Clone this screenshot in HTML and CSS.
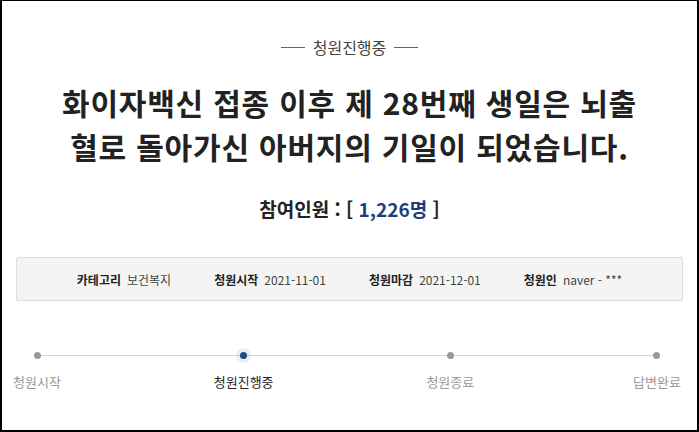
FILE: index.html
```html
<!DOCTYPE html>
<html lang="ko">
<head>
<meta charset="utf-8">
<link rel="stylesheet" href="styles.css">
</head>
<body>
<div class="frame">
  <div class="status"><span class="dash"></span><span class="status-text">청원진행중</span><span class="dash"></span></div>
  <h1 class="title">화이자백신 접종 이후 제 28번째 생일은 뇌출<br>혈로 돌아가신 아버지의 기일이 되었습니다.</h1>
  <div class="count">참여인원 : [ <span class="num">1,226명</span> ]</div>
  <div class="info">
    <div class="item"><b>카테고리</b><span>보건복지</span></div>
    <div class="item"><b>청원시작</b><span>2021-11-01</span></div>
    <div class="item"><b>청원마감</b><span>2021-12-01</span></div>
    <div class="item"><b>청원인</b><span>naver - ***</span></div>
  </div>
  <div class="progress">
    <div class="track"></div>
    <div class="step"><span class="dot"></span><span class="label">청원시작</span></div>
    <div class="step active"><span class="dot"></span><span class="label">청원진행중</span></div>
    <div class="step"><span class="dot"></span><span class="label">청원종료</span></div>
    <div class="step"><span class="dot"></span><span class="label">답변완료</span></div>
  </div>
</div>
</body>
</html>
```
FILE: styles.css
```css
html, body { margin: 0; padding: 0; background: #fff; }
body { font-family: "Noto Sans CJK KR", "Noto Sans", sans-serif; color: #222; }
.frame {
  width: 699px; height: 432px; box-sizing: border-box;
  border: 2px solid #000; border-top-width: 1px;
  display: flex; flex-direction: column; align-items: center;
}
.status {
  margin-top: 36px; display: flex; align-items: center; gap: 8px;
  font-size: 16px; line-height: 20px; color: #444;
}
.dash { width: 24px; height: 1px; background: #666; }
.title {
  margin: 23px 0 0; font-size: 30px; line-height: 44px; font-weight: 700;
  text-align: center; color: #222; letter-spacing: 0.8px;
}
.count {
  margin-top: 28px; font-size: 19px; line-height: 26px; font-weight: 700; color: #222;
}
.count .num { color: #1d3f78; }
.info {
  margin-top: 35px; width: 667px; height: 44px; box-sizing: border-box;
  background: #f4f4f4; border: 1px solid #dcdcdc; border-radius: 2px;
  display: flex; justify-content: center; align-items: center; gap: 43px;
  font-size: 12px; color: #444;
}
.item { display: flex; gap: 6px; align-items: center; }
.item b { color: #222; font-weight: 700; }
.progress {
  position: relative; margin-top: 48px; width: 664px; margin-left: 13px; align-self: flex-start; height: 50px;
  display: flex; justify-content: space-between;
}
.track { position: absolute; left: 22px; right: 22px; top: 6px; height: 1px; background: #d6d6d6; }
.step { position: relative; width: 44px; display: flex; flex-direction: column; align-items: center; }
.dot { width: 7px; height: 7px; border-radius: 50%; background: #999; margin-top: 3px; position: relative; z-index: 1; }
.label { margin-top: 14px; font-size: 13px; line-height: 18px; color: #999; white-space: nowrap; }
.active .dot { background: #1a4a8a; box-shadow: 0 0 0 4px rgba(120,160,220,0.18); }
.active .label { color: #222; }
```
